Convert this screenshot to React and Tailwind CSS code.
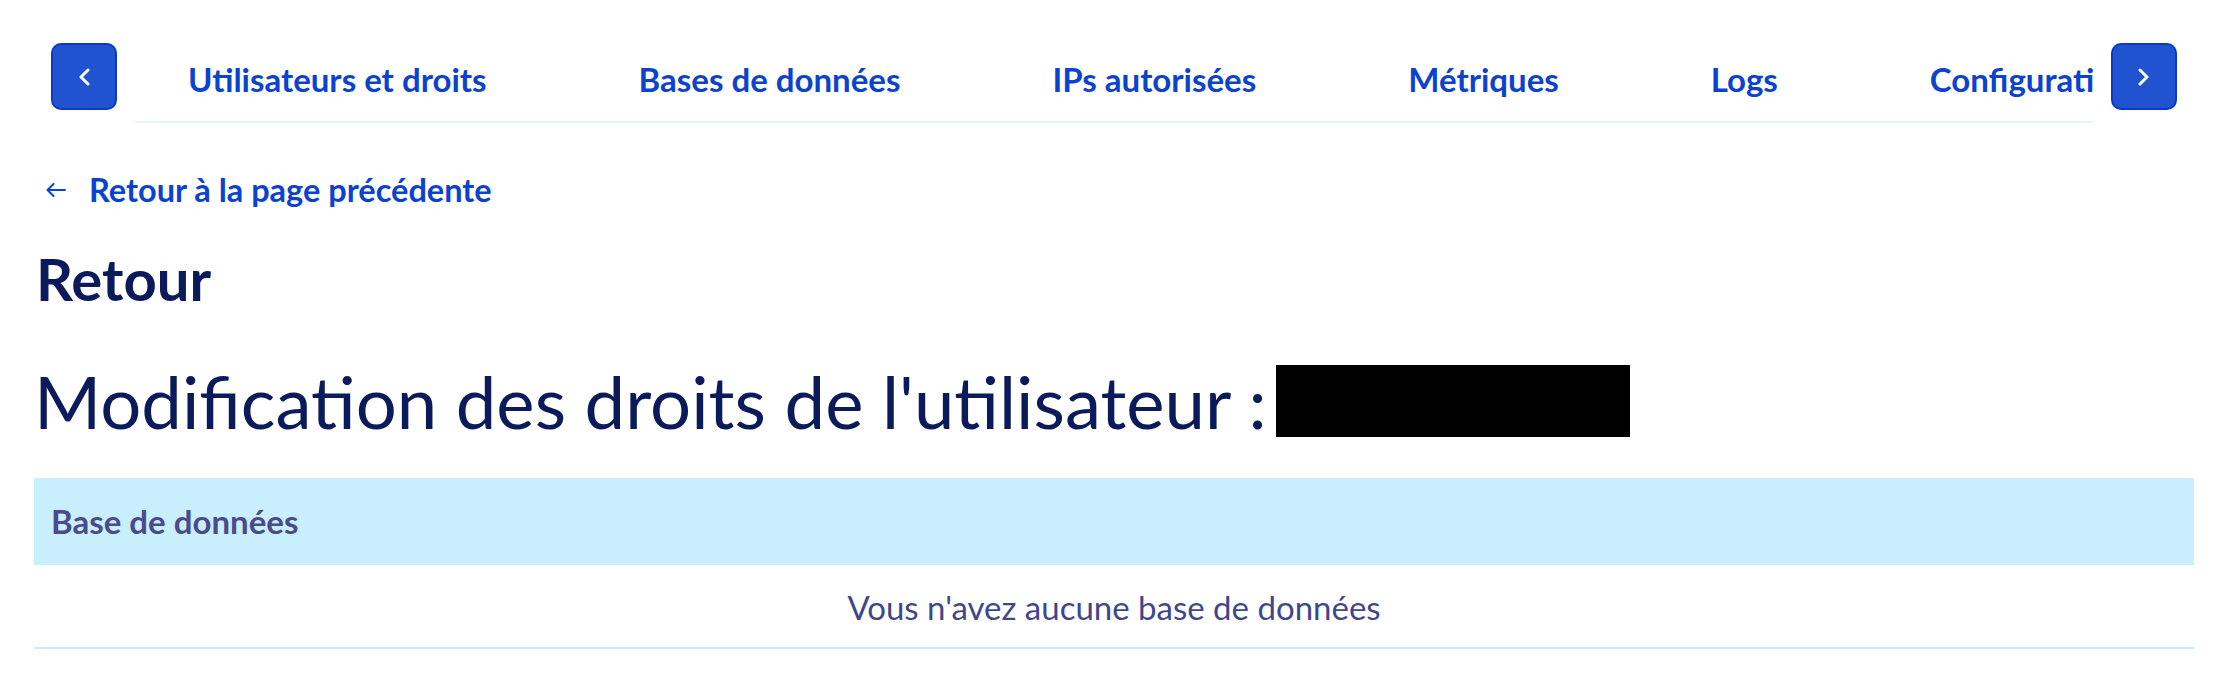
import React from 'react';

const tabs = ['Utilisateurs et droits', 'Bases de données', 'IPs autorisées', 'Métriques', 'Logs', 'Configuration'];

function Chevron({ dir }) {
  return (
    <svg width="12" height="18" viewBox="0 0 12 18" fill="none">
      {dir === 'left'
        ? <path d="M10 2 L3 9 L10 16" stroke="white" strokeWidth="3" strokeLinecap="round" strokeLinejoin="round" />
        : <path d="M2 2 L9 9 L2 16" stroke="white" strokeWidth="3" strokeLinecap="round" strokeLinejoin="round" />}
    </svg>
  );
}

function NavButton({ dir }) {
  return (
    <button className="w-[66px] h-[67px] shrink-0 rounded-[10px] bg-[#2152d0] border-2 border-[#0b3bc6] flex items-center justify-center">
      <Chevron dir={dir} />
    </button>
  );
}

export default function App() {
  return (
    <div className="min-h-screen bg-white pl-[34px] pr-[46px] pt-[43px] font-['Lato',sans-serif]">
      <div className="flex items-start px-[17px]">
        <NavButton dir="left" />
        <div className="flex-1 min-w-0 mx-[18px] h-[80px] overflow-hidden border-b-2 border-[#e6f2fc] flex items-center">
          <div className="flex items-center gap-[152px] pl-[53px] pb-[4px] whitespace-nowrap">
            {tabs.map(t => (
              <a key={t} className="text-[33px] font-bold text-[#0b43d0]">{t}</a>
            ))}
          </div>
        </div>
        <NavButton dir="right" />
      </div>

      <a className="mt-[43px] pl-[12px] flex items-center gap-[23px] text-[#0b43d0]">
        <svg width="20" height="14" viewBox="0 0 20 14" fill="none">
          <path d="M19 7 H1.5 M7.5 1 L1.5 7 L7.5 13" stroke="#0b43d0" strokeWidth="2" strokeLinecap="round" strokeLinejoin="round" />
        </svg>
        <span className="text-[32.5px] font-bold leading-[48px]">Retour à la page précédente</span>
      </a>

      <h2 className="mt-[33px] pl-[2px] text-[58px] font-bold leading-[64px] text-[#0a1a5a]">Retour</h2>

      <h1 className="mt-[50px] flex items-center text-[72.5px] leading-[80px] text-[#0a1a5a]">
        <span>Modification des droits de l'utilisateur :</span>
        <span className="ml-[9px] inline-block w-[354px] h-[72px] bg-black"></span>
      </h1>

      <table className="mt-[37px] w-full border-collapse">
        <thead>
          <tr className="bg-[#c9effd]">
            <th className="h-[87px] px-[17px] text-left text-[33px] font-bold text-[#4a4a8c]">Base de données</th>
          </tr>
        </thead>
        <tbody>
          <tr className="border-b-2 border-[#c4eefd]">
            <td className="h-[83px] pt-[3px] text-center text-[33px] text-[#3f478c]">Vous n'avez aucune base de données</td>
          </tr>
        </tbody>
      </table>
    </div>
  );
}
